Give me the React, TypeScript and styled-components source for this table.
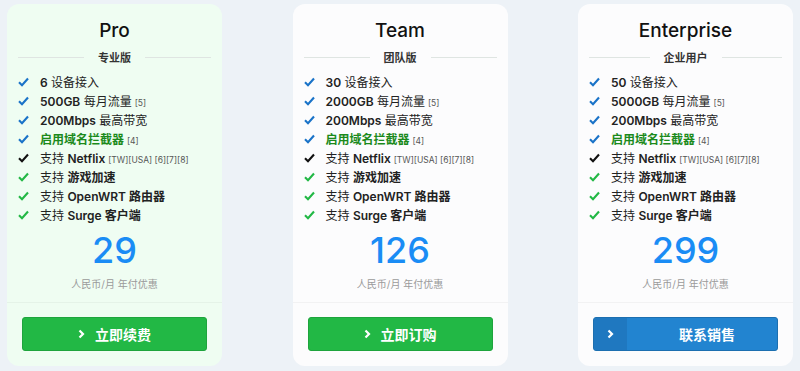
import styled, { createGlobalStyle } from "styled-components"

const GlobalStyle = createGlobalStyle`
    html, body {
        margin: 0;
        padding: 0;
        background: #edf2f7;
        font-family: Inter, "Noto Sans CJK SC", sans-serif;
    }
`

const Pagina = styled.div`
    display: flex;
    justify-content: space-between;
    padding: 4px 7px 5px 7px;
`

const Card = styled.div<{ $destaque?: boolean }>`
    width: 215px;
    height: 362px;
    box-sizing: border-box;
    border-radius: 12px;
    background: ${({ $destaque }) => ($destaque ? "#effdf2" : "#fcfcfd")};
    display: flex;
    flex-direction: column;
    padding: 15px 0 15px 0;
`

const Titulo = styled.h2`
    margin: 0;
    font-size: 19px;
    line-height: 24px;
    font-weight: 500;
    color: #111;
    text-align: center;
`

const Divisor = styled.div`
    margin: 7px 11px 0 11px;
    height: 14px;
    display: flex;
    align-items: center;
    gap: 14px;
    font-size: 11px;
    font-weight: 700;
    color: #333;

    &::before, &::after {
        content: "";
        flex: 1;
        height: 1px;
        background: #dfe5e2;
    }
`

const Lista = styled.ul`
    list-style: none;
    margin: 8px 0 0 0;
    padding: 0 0 0 11px;
`

const Item = styled.li`
    height: 19px;
    display: flex;
    align-items: center;
    gap: 11px;
    font-size: 12px;
    color: #222;
    white-space: nowrap;

    b { font-weight: 600; }
    .verde { color: #1b8a1b; font-weight: 700; }
    small { font-size: 8.5px; color: #555; margin-left: 3px; }
`

const Preco = styled.div`
    margin-top: 6px;
    font-size: 36px;
    line-height: 40px;
    font-weight: 500;
    color: #1a8cf5;
    text-align: center;
`

const Nota = styled.div`
    margin-top: 7px;
    font-size: 10px;
    line-height: 14px;
    color: #9a9a9a;
    text-align: center;
`

const Linha = styled.div`
    margin-top: 11px;
    height: 1px;
    background: rgba(0, 0, 0, 0.04);
`

const Botao = styled.button<{ $azul?: boolean }>`
    margin: 14px 15px 0 15px;
    height: 34px;
    border-radius: 3px;
    border: 1px solid ${({ $azul }) => ($azul ? "#1c6fb0" : "#1ea43d")};
    background: ${({ $azul }) => ($azul ? "#2284d0" : "#22b845")};
    color: #fff;
    font-family: inherit;
    font-size: 14px;
    font-weight: 700;
    display: flex;
    align-items: center;
    justify-content: center;
    gap: 10px;
    padding: 0;
    overflow: hidden;
`

const Seta = styled.span`
    display: flex;
    align-items: center;
`

const BlocoSeta = styled.span`
    width: 33px;
    align-self: stretch;
    background: #1f78c0;
    display: flex;
    align-items: center;
    justify-content: center;
`

const TextoAzul = styled.span`
    flex: 1;
    text-align: center;
`

type Parte = { t: string, k?: "b" | "g" | "s" }
type Recurso = { cor: string, partes: Parte[] }

const AZUL = "#1a73c8"
const PRETO = "#111"
const VERDE = "#22b845"

const recursos = (disp: string, trafego: string): Recurso[] => [
    { cor: AZUL, partes: [{ t: disp, k: "b" }, { t: " 设备接入" }] },
    { cor: AZUL, partes: [{ t: trafego, k: "b" }, { t: " 每月流量" }, { t: "[5]", k: "s" }] },
    { cor: AZUL, partes: [{ t: "200Mbps", k: "b" }, { t: " 最高带宽" }] },
    { cor: AZUL, partes: [{ t: "启用域名拦截器", k: "g" }, { t: "[4]", k: "s" }] },
    { cor: PRETO, partes: [{ t: "支持 " }, { t: "Netflix", k: "b" }, { t: "[TW][USA] [6][7][8]", k: "s" }] },
    { cor: VERDE, partes: [{ t: "支持 " }, { t: "游戏加速", k: "b" }] },
    { cor: VERDE, partes: [{ t: "支持 " }, { t: "OpenWRT 路由器", k: "b" }] },
    { cor: VERDE, partes: [{ t: "支持 " }, { t: "Surge 客户端", k: "b" }] },
]

const planos = [
    { nome: "Pro", sub: "专业版", preco: "29", acao: "立即续费", destaque: true, itens: recursos("6", "500GB") },
    { nome: "Team", sub: "团队版", preco: "126", acao: "立即订购", itens: recursos("30", "2000GB") },
    { nome: "Enterprise", sub: "企业用户", preco: "299", acao: "联系销售", azul: true, itens: recursos("50", "5000GB") },
]

const Check = ({ cor }: { cor: string }) => (
    <svg width="11" height="10" viewBox="0 0 11 10">
        <path d="M1 5.2 L4 8.2 L10 1.5" fill="none" stroke={cor} strokeWidth="2.1" />
    </svg>
)

const Chevron = () => (
    <svg width="7" height="10" viewBox="0 0 7 10">
        <path d="M1.5 1.5 L5 5 L1.5 8.5" fill="none" stroke="#fff" strokeWidth="2.2" />
    </svg>
)

const renderParte = (p: Parte, i: number) => {
    if (p.k === "b") return <b key={i}>{p.t}</b>
    if (p.k === "g") return <span key={i} className="verde">{p.t}</span>
    if (p.k === "s") return <small key={i}>{p.t}</small>
    return <span key={i}>{p.t}</span>
}

const App = () => {
    return (
        <Pagina>
            <GlobalStyle />
            {planos.map(plano => (
                <Card key={plano.nome} $destaque={plano.destaque}>
                    <Titulo>{plano.nome}</Titulo>
                    <Divisor>{plano.sub}</Divisor>
                    <Lista>
                        {plano.itens.map((item, i) => (
                            <Item key={i}>
                                <Check cor={item.cor} />
                                <span>{item.partes.map(renderParte)}</span>
                            </Item>
                        ))}
                    </Lista>
                    <Preco>{plano.preco}</Preco>
                    <Nota>人民币/月 年付优惠</Nota>
                    <Linha />
                    {plano.azul ? (
                        <Botao $azul>
                            <BlocoSeta><Chevron /></BlocoSeta>
                            <TextoAzul>{plano.acao}</TextoAzul>
                        </Botao>
                    ) : (
                        <Botao>
                            <Seta><Chevron /></Seta>
                            {plano.acao}
                        </Botao>
                    )}
                </Card>
            ))}
        </Pagina>
    )
}

export default App
